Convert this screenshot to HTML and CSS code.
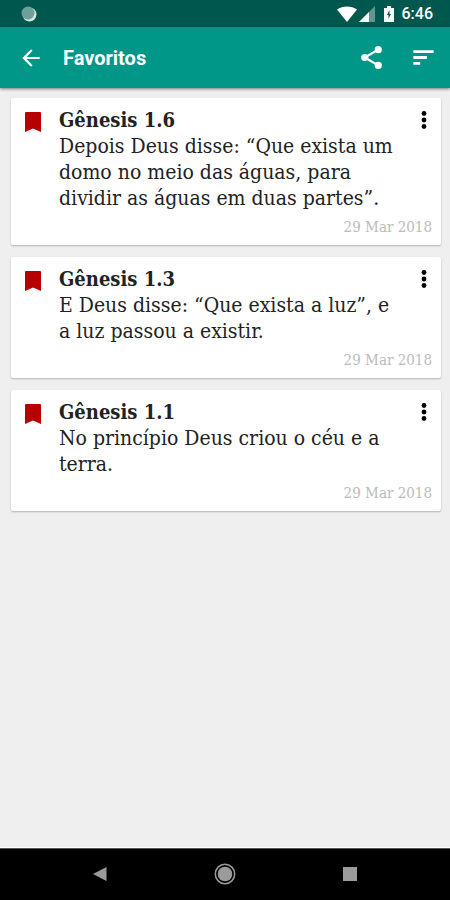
FILE: index.html
```html
<!DOCTYPE html>
<html lang="pt">
  <head>
    <meta charset="UTF-8" />
    <meta name="viewport" content="width=device-width, initial-scale=1.0" />
    <title>Favoritos</title>
    <link rel="stylesheet" href="styles.css">
  </head>

  <body>
    <div class="status-bar">
      <svg class="sync-icon" width="16" height="16" viewBox="0 0 16 16">
        <circle cx="8.5" cy="8.5" r="7" fill="#d5e3e1" />
        <circle cx="7" cy="7" r="6.5" fill="#6f9f99" />
      </svg>
      <div class="status-icons">
        <svg class="wifi-icon" width="20" height="16" viewBox="0 0 20 16">
          <path d="M0 3.500C5.500-.5 14.500-.5 20 3.500L10 16z" fill="#fff" />
        </svg>
        <svg class="signal-icon" width="16" height="16" viewBox="0 0 16 16">
          <path d="M0 16L16 0v16z" fill="#5f9690" />
          <path d="M0 16L10 6v10z" fill="#fff" />
        </svg>
        <svg class="battery-icon" width="10" height="16" viewBox="0 0 10 16">
          <path d="M3 0h4v2h3v14H0V2h3z" fill="#fff" />
          <path d="M5.500 4L3 9h1.500V12.500L7 8H5.500z" fill="#00574d" />
        </svg>
        <span class="clock">6:46</span>
      </div>
    </div>

    <header class="app-bar">
      <button class="icon-button" type="button" aria-label="Voltar">
        <svg width="26" height="26" viewBox="0 0 24 24">
          <path d="M20 11H7.830l5.590-5.590L12 4l-8 8 8 8 1.410-1.410L7.830 13H20z" fill="#fff" />
        </svg>
      </button>
      <h1 class="page-title">Favoritos</h1>
      <button class="icon-button" type="button" aria-label="Compartilhar">
        <svg width="27" height="27" viewBox="0 0 24 24">
          <path d="M6 12L18 5M6 12l12 7" stroke="#fff" stroke-width="2" />
          <circle cx="18" cy="5" r="3.200" fill="#fff" />
          <circle cx="6" cy="12" r="3.200" fill="#fff" />
          <circle cx="18" cy="19" r="3.200" fill="#fff" />
        </svg>
      </button>
      <button class="icon-button sort-button" type="button" aria-label="Ordenar">
        <svg width="27" height="27" viewBox="0 0 24 24">
          <path d="M3 5.500h18v2.500H3zM3 10.750h12v2.500H3zM3 16h6v2.500H3z" fill="#fff" />
        </svg>
      </button>
    </header>

    <main class="favorites">
      <article class="card">
        <svg class="bookmark" width="16" height="20" viewBox="0 0 16 20">
          <path d="M1 0h14q1 0 1 1v19l-8-3.500L0 20V1q0-1 1-1z" fill="#b80000" />
        </svg>
        <div class="card-text">
          <h2 class="verse-title">Gênesis 1.6</h2>
          <p class="verse">Depois Deus disse: “Que exista um domo no meio das águas, para dividir as águas em duas partes”.</p>
        </div>
        <button class="menu-button" type="button" aria-label="Opções">
          <svg width="6" height="18" viewBox="0 0 6 18">
            <circle cx="3" cy="2.500" r="2.400" />
            <circle cx="3" cy="9" r="2.400" />
            <circle cx="3" cy="15.500" r="2.400" />
          </svg>
        </button>
        <time class="date" datetime="2018-03-29">29 Mar 2018</time>
      </article>

      <article class="card">
        <svg class="bookmark" width="16" height="20" viewBox="0 0 16 20">
          <path d="M1 0h14q1 0 1 1v19l-8-3.500L0 20V1q0-1 1-1z" fill="#b80000" />
        </svg>
        <div class="card-text">
          <h2 class="verse-title">Gênesis 1.3</h2>
          <p class="verse">E Deus disse: “Que exista a luz”, e a luz passou a existir.</p>
        </div>
        <button class="menu-button" type="button" aria-label="Opções">
          <svg width="6" height="18" viewBox="0 0 6 18">
            <circle cx="3" cy="2.500" r="2.400" />
            <circle cx="3" cy="9" r="2.400" />
            <circle cx="3" cy="15.500" r="2.400" />
          </svg>
        </button>
        <time class="date" datetime="2018-03-29">29 Mar 2018</time>
      </article>

      <article class="card">
        <svg class="bookmark" width="16" height="20" viewBox="0 0 16 20">
          <path d="M1 0h14q1 0 1 1v19l-8-3.500L0 20V1q0-1 1-1z" fill="#b80000" />
        </svg>
        <div class="card-text">
          <h2 class="verse-title">Gênesis 1.1</h2>
          <p class="verse">No princípio Deus criou o céu e a terra.</p>
        </div>
        <button class="menu-button" type="button" aria-label="Opções">
          <svg width="6" height="18" viewBox="0 0 6 18">
            <circle cx="3" cy="2.500" r="2.400" />
            <circle cx="3" cy="9" r="2.400" />
            <circle cx="3" cy="15.500" r="2.400" />
          </svg>
        </button>
        <time class="date" datetime="2018-03-29">29 Mar 2018</time>
      </article>
    </main>

    <nav class="nav-bar">
      <button class="nav-button" type="button" aria-label="Voltar">
        <svg width="22" height="22" viewBox="0 0 22 22">
          <path d="M4 11L17.500 4v14z" fill="#9b9b9b" />
        </svg>
      </button>
      <button class="nav-button" type="button" aria-label="Início">
        <svg width="22" height="22" viewBox="0 0 22 22">
          <circle cx="11" cy="11" r="9.700" fill="none" stroke="#9b9b9b" stroke-width="1.500" />
          <circle cx="11" cy="11" r="7.300" fill="#9b9b9b" />
        </svg>
      </button>
      <button class="nav-button" type="button" aria-label="Recentes">
        <svg width="22" height="22" viewBox="0 0 22 22">
          <path d="M4 4h14v14H4z" fill="#9b9b9b" />
        </svg>
      </button>
    </nav>
  </body>
</html>
```
FILE: styles.css
```css
/* General body and layout settings */
body {
  margin: 0;
  min-height: 100vh;
  display: flex;
  flex-direction: column;
  background-color: #efefef;
  font-family: Roboto, sans-serif;
}

h1, h2, p {
  margin: 0;
}

svg {
  display: block;
}

button {
  padding: 0;
  border: none;
  background: none;
  cursor: pointer;
}

/* Status bar */
.status-bar {
  display: flex;
  justify-content: space-between;
  align-items: center;
  height: 27px;
  padding: 0 17px 0 21px;
  background-color: #00574d;
}

.status-icons {
  display: flex;
  align-items: center;
}

.signal-icon {
  margin-left: 2px;
}

.battery-icon {
  margin-left: 9px;
}

.clock {
  margin-left: 8px;
  color: white;
  font-size: 16px;
  font-weight: 500;
  line-height: 20px;
}

/* App bar */
.app-bar {
  display: flex;
  align-items: center;
  height: 61px;
  padding: 0 13px 0 18px;
  background-color: #009788;
  box-shadow: 0 1px 3px rgba(0, 0, 0, 0.5);
}

.page-title {
  flex: 1;
  margin-left: 19px;
  color: white;
  font-size: 20px;
  font-weight: bold;
  line-height: 24px;
}

.sort-button {
  margin-left: 25px;
}

/* Favorites list */
.favorites {
  flex: 1;
  display: flex;
  flex-direction: column;
  gap: 12px;
  padding: 10px 9px 12px 11px;
  font-family: "DejaVu Serif Condensed", "DejaVu Serif", serif;
}

.card {
  display: grid;
  grid-template-columns: 34px 1fr 16px;
  align-items: start;
  padding: 9px 9px 8px 14px;
  border-radius: 2px;
  background-color: white;
  box-shadow: 0 1px 2px rgba(0, 0, 0, 0.25);
}

.bookmark {
  margin-top: 5px;
}

.card-text {
  padding-right: 16px;
  color: #222;
  font-size: 21px;
  line-height: 26px;
}

.verse-title {
  font-size: 20px;
  font-weight: bold;
}

.menu-button {
  margin-top: 4px;
  justify-self: center;
}

.date {
  grid-column: 1 / -1;
  margin-top: 6px;
  color: #bbb;
  font-size: 15px;
  line-height: 20px;
  text-align: right;
}

/* Navigation bar */
.nav-bar {
  display: flex;
  justify-content: center;
  align-items: center;
  gap: 103px;
  height: 49px;
  padding-bottom: 2px;
  border-top: 1px solid #555;
  background-color: black;
  box-shadow: 0 -1px 0 white;
}
```
